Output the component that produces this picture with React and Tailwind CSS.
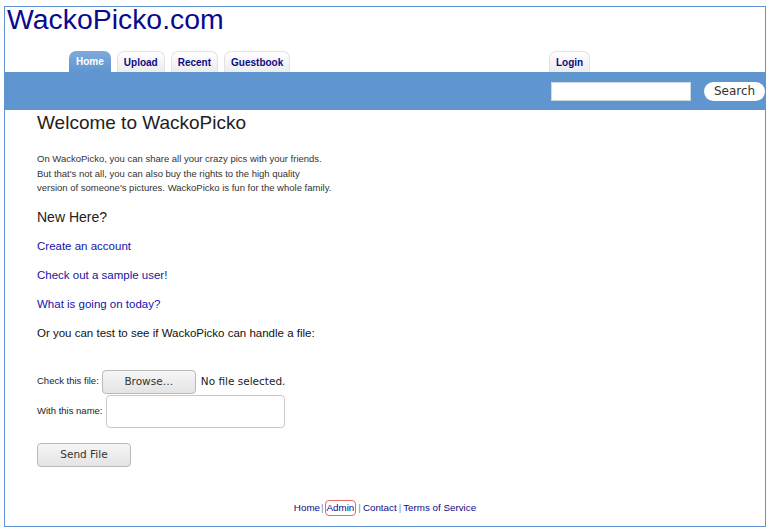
import React from 'react';

const tabs = ['Home', 'Upload', 'Recent', 'Guestbook'];

const Tab = ({ label, active }) => (
  <div
    className={
      active
        ? 'h-[21px] px-[7px] flex items-center rounded-t-[7px] bg-gradient-to-b from-[#7fabdd] to-[#5f96d0] text-white text-[10px] font-bold'
        : 'h-[21px] px-[6px] flex items-center rounded-t-[7px] border border-b-0 border-[#e2e2e2] bg-gradient-to-b from-[#ffffff] to-[#ececec] text-[#0b0b86] text-[10px] font-bold'
    }
  >
    {label}
  </div>
);

export default function App() {
  return (
    <div className="bg-white w-[771px] h-[532px] pt-[6px] pl-[4px] font-['Liberation_Sans',Arial,sans-serif]">
      <div className="w-[762px] h-[521px] border border-[#5f93d1] flex flex-col">
        <h1 className="text-[28.4px] leading-[22px] mt-[1px] pl-[2px] text-[#0a0a8f]">WackoPicko.com</h1>

        <div className="flex mt-[21px]">
          <div className="flex gap-[6px] pl-[64px] items-end">
            {tabs.map((t, i) => (
              <Tab key={t} label={t} active={i === 0} />
            ))}
          </div>
          <div className="ml-auto w-[216px] flex items-end">
            <Tab label="Login" />
          </div>
        </div>

        <div className="h-[38px] bg-[#5f96d0] flex items-center justify-end">
          <div className="w-[215px] flex items-center">
            <input className="w-[140px] h-[19px] ml-[1px] bg-white border border-[#d0d8e4] outline-none" />
            <button className="ml-[13px] w-[61px] h-[19px] rounded-full bg-white text-[12px] leading-none text-[#333] font-['DejaVu_Sans',sans-serif]">
              Search
            </button>
          </div>
        </div>

        <div className="pl-[32px] flex flex-col">
          <h2 className="text-[19px] leading-none mt-[3px] text-[#222]">Welcome to WackoPicko</h2>
          <p className="text-[9.5px] leading-[14.5px] text-[#333] mt-[20px]">
            On WackoPicko, you can share all your crazy pics with your friends.<br />
            But that's not all, you can also buy the rights to the high quality<br />
            version of someone's pictures. WackoPicko is fun for the whole family.
          </p>
          <h3 className="text-[14px] leading-none mt-[14px] text-[#222]">New Here?</h3>
          <div className="flex flex-col gap-[16px] mt-[16px] text-[11.5px] leading-[13px]">
            <a className="text-[#1414a8]" href="#">Create an account</a>
            <a className="text-[#1414a8]" href="#">Check out a sample user!</a>
            <a className="text-[#1414a8]" href="#">What is going on today?</a>
            <span className="text-[#111]">Or you can test to see if WackoPicko can handle a file:</span>
          </div>

          <div className="mt-[30px] flex items-center gap-[3px]">
            <span className="text-[9.5px] text-[#222]">Check this file:</span>
            <button className="w-[94px] h-[24px] rounded-[4px] border border-[#b9b9b9] bg-gradient-to-b from-[#f6f6f6] to-[#e4e4e4] text-[10.5px] text-[#333] font-['DejaVu_Sans',sans-serif]">
              Browse…
            </button>
            <span className="ml-[2px] text-[10.5px] text-[#222] font-['DejaVu_Sans',sans-serif]">No file selected.</span>
          </div>
          <div className="flex items-center gap-[4px] mt-[1px]">
            <span className="text-[9.5px] text-[#222]">With this name:</span>
            <input className="w-[179px] h-[33px] rounded-[4px] border border-[#c8c8c8] bg-white outline-none" />
          </div>
          <button className="mt-[15px] w-[94px] h-[24px] rounded-[4px] border border-[#b9b9b9] bg-gradient-to-b from-[#f6f6f6] to-[#e4e4e4] text-[10.5px] text-[#333] font-['DejaVu_Sans',sans-serif]">
            Send File
          </button>
        </div>

        <div className="mt-auto mb-[10px] flex justify-center items-center text-[9.8px] text-[#0b0b86]">
          <span>Home</span>
          <span className="text-[#888] mx-[1px]">|</span>
          <span className="border-[1.5px] border-[#ee6666] rounded-[4px] px-[1px] py-[2px] leading-none">Admin</span>
          <span className="text-[#888] mx-[2px]">|</span>
          <span>Contact</span>
          <span className="text-[#888] mx-[2px]">|</span>
          <span>Terms of Service</span>
        </div>
      </div>
    </div>
  );
}
